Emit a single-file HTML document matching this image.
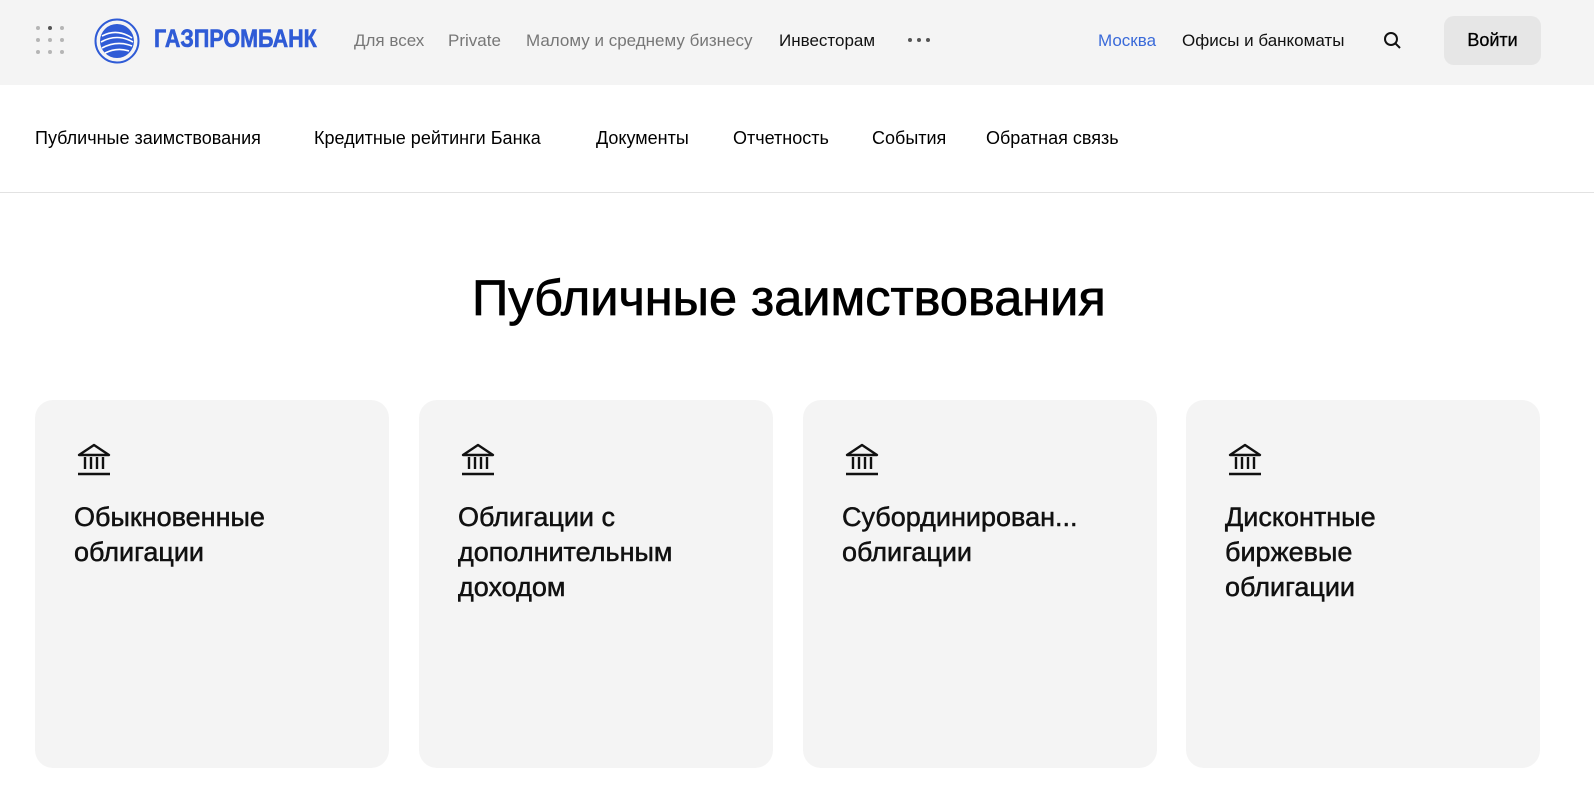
<!DOCTYPE html>
<html><head><meta charset="utf-8"><style>
*{margin:0;padding:0;box-sizing:border-box}
body{width:1594px;height:802px;background:#fff;font-family:"Liberation Sans","Noto Sans CJK SC",sans-serif;overflow:hidden;position:relative;color:#000}
.hdr{position:absolute;left:0;top:0;width:1594px;height:85px;background:#f4f4f4}
.t{position:absolute;white-space:nowrap}
.dot{position:absolute;width:4px;height:4px;border-radius:50%;background:#b5b5b5}
.sub{position:absolute;top:192px;left:0;width:1594px;height:1px;background:#e2e2e2}
.card{position:absolute;top:400px;width:354px;height:368px;background:#f4f4f4;border-radius:18px}
.card svg{position:absolute;left:41px;top:42px}
.card .h{position:absolute;left:39px;top:100px;font-size:27px;line-height:35px;color:#111;-webkit-text-stroke:0.5px #111}
</style></head><body>
<div class="hdr"></div>
<div class="dot" style="left:36px;top:26px"></div><div class="dot" style="left:48px;top:26px;background:#555"></div><div class="dot" style="left:60px;top:26px"></div>
<div class="dot" style="left:36px;top:38px"></div><div class="dot" style="left:48px;top:38px"></div><div class="dot" style="left:60px;top:38px"></div>
<div class="dot" style="left:36px;top:50px"></div><div class="dot" style="left:48px;top:50px"></div><div class="dot" style="left:60px;top:50px"></div>
<svg style="position:absolute;left:94px;top:18px" width="46" height="46" viewBox="0 0 46 46"><circle cx="23" cy="23" r="21.5" fill="none" stroke="#2f5bd6" stroke-width="2"/><circle cx="23" cy="23" r="17" fill="#2f5bd6"/><g stroke="#fff" stroke-width="1.6" fill="none"><path d="M8 18q15-8 30 2"/><path d="M7 24q16-9 32 0"/><path d="M8 30q15-8 30-2"/><path d="M11 35q12-6 24-2"/></g></svg>
<div class="t" style="left:154px;top:25px;font-size:25px;font-weight:700;color:#2f5bd6;-webkit-text-stroke:0.6px #2f5bd6;transform:scaleX(0.86);transform-origin:left">ГАЗПРОМБАНК</div>
<div class="t" style="left:354px;top:31px;font-size:17px;color:#777">Для всех</div>
<div class="t" style="left:448px;top:31px;font-size:17px;color:#777">Private</div>
<div class="t" style="left:526px;top:31px;font-size:17px;color:#777">Малому и среднему бизнесу</div>
<div class="t" style="left:779px;top:31px;font-size:17px;color:#111">Инвесторам</div>
<div class="dot" style="left:908px;top:38px;background:#555"></div><div class="dot" style="left:917px;top:38px;background:#555"></div><div class="dot" style="left:926px;top:38px;background:#555"></div>
<div class="t" style="left:1098px;top:31px;font-size:17px;color:#3a6ad9">Москва</div>
<div class="t" style="left:1182px;top:31px;font-size:17px;color:#111">Офисы и банкоматы</div>
<svg style="position:absolute;left:1383px;top:31px" width="19" height="19" viewBox="0 0 19 19"><circle cx="8" cy="8" r="6" fill="none" stroke="#111" stroke-width="2"/><path d="M12.5 12.5L17 17" stroke="#111" stroke-width="2"/></svg>
<div style="position:absolute;left:1444px;top:16px;width:97px;height:49px;background:#e6e6e6;border-radius:10px;font-size:18px;-webkit-text-stroke:0.3px #000;text-align:center;line-height:49px">Войти</div>
<div class="t" style="left:35px;top:128px;font-size:18px">Публичные заимствования</div>
<div class="t" style="left:314px;top:128px;font-size:18px">Кредитные рейтинги Банка</div>
<div class="t" style="left:596px;top:128px;font-size:18px">Документы</div>
<div class="t" style="left:733px;top:128px;font-size:18px">Отчетность</div>
<div class="t" style="left:872px;top:128px;font-size:18px">События</div>
<div class="t" style="left:986px;top:128px;font-size:18px">Обратная связь</div>
<div class="sub"></div>
<div class="t" style="left:472px;top:268px;font-size:50.5px;-webkit-text-stroke:0.8px #000">Публичные заимствования</div>
<div class="card" style="left:35px"><svg width="36" height="34" viewBox="0 0 36 34"><g fill="none" stroke="#111" stroke-width="2.4"><path d="M3 13L18 3l15 10z" stroke-linejoin="round"/><path d="M9 15v12M15 15v12M21 15v12M27 15v12"/><path d="M2 32h32"/></g></svg><div class="h">Обыкновенные<br>облигации</div></div>
<div class="card" style="left:419px"><svg width="36" height="34" viewBox="0 0 36 34"><g fill="none" stroke="#111" stroke-width="2.4"><path d="M3 13L18 3l15 10z" stroke-linejoin="round"/><path d="M9 15v12M15 15v12M21 15v12M27 15v12"/><path d="M2 32h32"/></g></svg><div class="h">Облигации с<br>дополнительным<br>доходом</div></div>
<div class="card" style="left:803px"><svg width="36" height="34" viewBox="0 0 36 34"><g fill="none" stroke="#111" stroke-width="2.4"><path d="M3 13L18 3l15 10z" stroke-linejoin="round"/><path d="M9 15v12M15 15v12M21 15v12M27 15v12"/><path d="M2 32h32"/></g></svg><div class="h">Субординирован...<br>облигации</div></div>
<div class="card" style="left:1186px"><svg width="36" height="34" viewBox="0 0 36 34"><g fill="none" stroke="#111" stroke-width="2.4"><path d="M3 13L18 3l15 10z" stroke-linejoin="round"/><path d="M9 15v12M15 15v12M21 15v12M27 15v12"/><path d="M2 32h32"/></g></svg><div class="h">Дисконтные<br>биржевые<br>облигации</div></div>
</body></html>
